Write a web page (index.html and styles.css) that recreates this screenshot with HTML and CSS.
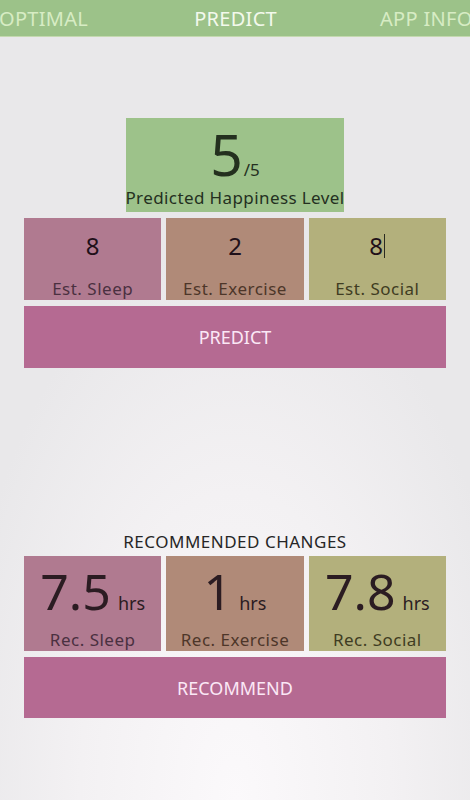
FILE: index.html
```html
<!DOCTYPE html>
<html>
<head>
<meta charset="utf-8">
<link rel="stylesheet" href="styles.css">
</head>
<body>
<div class="tabs">
  <span class="tab">OPTIMAL</span>
  <span class="tab active">PREDICT</span>
  <span class="tab">APP INFO</span>
</div>
<main class="content">
  <div class="happy">
    <div class="happy-score"><span class="big">5</span><span class="of">/5</span></div>
    <div class="happy-label">Predicted Happiness Level</div>
  </div>
  <div class="row est">
    <div class="cell sleep"><div class="val">8</div><div class="lbl">Est. Sleep</div></div>
    <div class="cell exercise"><div class="val">2</div><div class="lbl">Est. Exercise</div></div>
    <div class="cell social"><div class="val">8<span class="cursor"></span></div><div class="lbl">Est. Social</div></div>
  </div>
  <div class="btn">PREDICT</div>
  <div class="rec-title">RECOMMENDED CHANGES</div>
  <div class="row rec">
    <div class="cell sleep"><div class="rval"><span class="num">7.5</span><span class="unit">hrs</span></div><div class="lbl">Rec. Sleep</div></div>
    <div class="cell exercise"><div class="rval"><span class="num">1</span><span class="unit">hrs</span></div><div class="lbl">Rec. Exercise</div></div>
    <div class="cell social"><div class="rval"><span class="num">7.8</span><span class="unit">hrs</span></div><div class="lbl">Rec. Social</div></div>
  </div>
  <div class="btn">RECOMMEND</div>
</main>
</body>
</html>
```

FILE: styles.css
```css
html, body {
  margin: 0;
  padding: 0;
}
body {
  width: 470px;
  height: 800px;
  overflow: hidden;
  font-family: "Noto Sans", "Open Sans", sans-serif;
  background: radial-gradient(ellipse 60% 70% at 50% 100%, #fbf9fb 0%, #f3f1f3 55%, #e9e8ea 100%);
}
.tabs {
  height: 37px;
  background: #9cc289;
  border-bottom: 1px solid #c4d9b0;
  display: flex;
  align-items: center;
  white-space: nowrap;
  overflow: hidden;
  box-sizing: border-box;
}
.tab {
  flex: none;
  font-size: 20px;
  letter-spacing: 0.3px;
  color: #d7ecc4;
}
.tab:first-child { margin-left: -1px; }
.tab.active {
  color: #f3f9ec;
  margin-left: 106px;
}
.tab:last-child { margin-left: 103px; }
.content {
  padding: 0 24px;
  display: flex;
  flex-direction: column;
}
.happy {
  align-self: center;
  width: 218px;
  height: 94px;
  margin-top: 81px;
  background: #9dc28a;
  display: flex;
  flex-direction: column;
  align-items: center;
  color: #24301f;
}
.happy-score {
  height: 70px;
  display: flex;
  align-items: baseline;
  padding-top: 4px;
  box-sizing: border-box;
}
.big {
  font-size: 57px;
  line-height: 64px;
}
.of {
  font-size: 17px;
  margin-left: 1px;
}
.happy-label {
  font-size: 17px;
  line-height: 20px;
  letter-spacing: 0.4px;
  white-space: nowrap;
}
.row {
  display: grid;
  grid-template-columns: 1fr 1fr 1fr;
  gap: 5px;
  margin-top: 6px;
}
.cell {
  display: flex;
  flex-direction: column;
  align-items: center;
}
.est .cell { height: 82px; }
.rec .cell { height: 95px; }
.sleep { background: #b07a90; }
.exercise { background: #b08a78; }
.social { background: #b3b07c; }
.val {
  font-size: 24px;
  line-height: 28px;
  margin-top: 14px;
  color: #1f1019;
  display: flex;
  align-items: center;
}
.cursor {
  display: inline-block;
  width: 1.5px;
  height: 24px;
  background: #2a2a20;
  margin-left: 1px;
}
.lbl {
  margin-top: auto;
  font-size: 17px;
  line-height: 20px;
  letter-spacing: 0.5px;
  padding-bottom: 1px;
  color: #4a3040;
  white-space: nowrap;
}
.exercise .lbl { color: #4d3629; }
.social .lbl { color: #3f3c22; }
.rval {
  display: flex;
  align-items: baseline;
  color: #2b1c22;
  margin-top: 6px;
}
.num {
  font-size: 50px;
  line-height: 58px;
}
.unit {
  font-size: 18px;
  margin-left: 7px;
}
.btn {
  margin-top: 6px;
  height: 62px;
  background: #b56a92;
  color: #fbe8f6;
  font-size: 18px;
  display: flex;
  align-items: center;
  justify-content: center;
}
.rec-title {
  margin-top: 164px;
  text-align: center;
  font-size: 17px;
  line-height: 20px;
  letter-spacing: 0.5px;
  color: #262626;
  margin-bottom: -6px;
  padding-bottom: 4px;
}
.rec + .btn { height: 61px; }
```
